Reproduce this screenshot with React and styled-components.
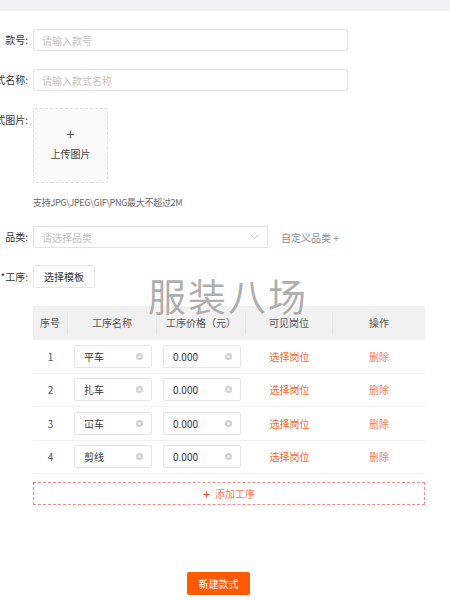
import React from 'react';
import styled, { createGlobalStyle } from 'styled-components';

const GlobalStyle = createGlobalStyle`
  body {
    margin: 0;
    background: #fff;
    font-family: "Noto Sans CJK SC", "Liberation Sans", sans-serif;
    font-size: 10px;
    color: #333;
  }
`;

const Page = styled.div`
  width: 450px;
  min-height: 600px;
  overflow: hidden;
`;

const TopBar = styled.div`
  height: 11px;
  background: #f0f0f2;
`;

const Form = styled.div`
  padding-top: 18px;
  display: flex;
  flex-direction: column;
`;

const Row = styled.div`
  display: flex;
  align-items: ${p => (p.$top ? 'flex-start' : 'center')};
  margin-bottom: ${p => p.$mb || 18}px;
`;

const Label = styled.div`
  width: 28px;
  margin-right: 5px;
  display: flex;
  justify-content: flex-end;
  white-space: nowrap;
  color: #333;
  font-size: 10px;
  line-height: 22px;
  padding-top: ${p => p.$pt || 0}px;
  flex-shrink: 0;
`;

const Input = styled.div`
  box-sizing: border-box;
  width: ${p => p.$w}px;
  height: 22px;
  border: 1px solid #e3e3e3;
  border-radius: 2px;
  padding: 0 8px;
  display: flex;
  align-items: center;
  justify-content: space-between;
  color: #c2c2c2;
  font-size: 10px;
`;

const Chevron = styled.svg`
  width: 9px;
  height: 6px;
`;

const TextLink = styled.span`
  margin-left: 13px;
  color: #8a8a8a;
  font-size: 10px;
`;

const Upload = styled.div`
  box-sizing: border-box;
  width: 75px;
  height: 75px;
  border: 1px dashed #e0e0e0;
  background: #fafafa;
  border-radius: 2px;
  display: flex;
  flex-direction: column;
  align-items: center;
  padding-top: 16px;
`;

const Plus = styled.div`
  font-size: 15px;
  line-height: 18px;
  color: #555;
`;

const UploadText = styled.div`
  margin-top: 3px;
  font-size: 10px;
  color: #444;
`;

const Hint = styled.div`
  margin-left: 33px;
  margin-bottom: 17px;
  margin-top: -4px;
  font-size: 9px;
  line-height: 12px;
  color: #666;
  letter-spacing: -0.3px;
`;

const GhostButton = styled.div`
  box-sizing: border-box;
  width: 62px;
  height: 23px;
  border: 1px solid #e8e8e8;
  border-radius: 2px;
  display: flex;
  align-items: center;
  justify-content: center;
  color: #333;
  font-size: 10px;
`;

const TableWrap = styled.div`
  position: relative;
  margin-left: 33px;
  width: 392px;
`;

const Watermark = styled.div`
  position: absolute;
  left: 115px;
  top: -31px;
  font-size: 38px;
  line-height: 40px;
  letter-spacing: 2px;
  color: rgba(120, 120, 120, 0.6);
  text-shadow: 1px 1px 0 rgba(255, 255, 255, 0.8), -1px -1px 0 rgba(255, 255, 255, 0.8);
  white-space: nowrap;
  pointer-events: none;
`;

const Grid = styled.div`
  display: grid;
  grid-template-columns: 35px 89px 89px 87px 92px;
  align-items: center;
  height: ${p => (p.$head ? 34 : 33.5)}px;
  background: ${p => (p.$head ? '#f1f1f1' : '#fff')};
  border-bottom: 1px solid ${p => (p.$head ? '#f1f1f1' : '#f0f0f0')};
  box-sizing: border-box;
`;

const HeadCell = styled.div`
  text-align: center;
  color: #555;
  font-size: 10px;
  height: 22px;
  line-height: 22px;
  border-right: ${p => (p.$last ? 'none' : '1px solid #e6e6e6')};
`;

const Cell = styled.div`
  display: flex;
  justify-content: ${p => (p.$left ? 'flex-start' : 'center')};
  padding-left: ${p => (p.$left ? 6 : 0)}px;
  color: ${p => p.$color || '#555'};
  font-size: 10px;
`;

const CellInput = styled.div`
  box-sizing: border-box;
  width: 78px;
  height: 23px;
  border: 1px solid #e6e6e6;
  border-radius: 2px;
  padding: 0 8px 0 9px;
  display: flex;
  align-items: center;
  justify-content: space-between;
  color: #333;
  font-size: 10px;
`;

const Clear = styled.span`
  width: 7px;
  height: 7px;
  border-radius: 50%;
  background: #cfcfcf;
  position: relative;
  &::after {
    content: '';
    position: absolute;
    left: 2px;
    top: 2px;
    width: 3px;
    height: 3px;
    border-radius: 50%;
    background: #f5f5f5;
  }
`;

const AddRow = styled.div`
  box-sizing: border-box;
  margin: 8px 0 0 33px;
  width: 392px;
  height: 23px;
  border: 1px dashed #ec8c8c;
  display: flex;
  align-items: center;
  justify-content: center;
  color: #f07a5a;
  font-size: 10px;
`;

const AddPlus = styled.span`
  color: #e8443a;
  font-size: 13px;
  margin-right: 5px;
  line-height: 13px;
`;

const Footer = styled.div`
  display: flex;
  justify-content: flex-start;
  padding-left: 187px;
  margin-top: 67px;
`;

const Primary = styled.div`
  width: 63px;
  height: 23px;
  background: #ff5a06;
  border-radius: 2px;
  color: #fff;
  font-size: 10px;
  display: flex;
  align-items: center;
  justify-content: center;
`;

const rows = [
  { no: 1, name: '平车' },
  { no: 2, name: '扎车' },
  { no: 3, name: '冚车' },
  { no: 4, name: '剪线' },
];

export default function App() {
  return (
    <Page>
      <GlobalStyle />
      <TopBar />
      <Form>
        <Row>
          <Label>款号:</Label>
          <Input $w={315}>请输入款号</Input>
        </Row>
        <Row $mb={17}>
          <Label>款式名称:</Label>
          <Input $w={315}>请输入款式名称</Input>
        </Row>
        <Row $top $mb={18}>
          <Label $pt={1}>款式图片:</Label>
          <Upload>
            <Plus>+</Plus>
            <UploadText>上传图片</UploadText>
          </Upload>
        </Row>
        <Hint>支持JPG\JPEG\GIF\PNG最大不超过2M</Hint>
        <Row $mb={17}>
          <Label>品类:</Label>
          <Input $w={235}>
            请选择品类
            <Chevron viewBox="0 0 9 6">
              <path d="M1 1l3.5 3.5L8 1" fill="none" stroke="#c8c8c8" strokeWidth="1" />
            </Chevron>
          </Input>
          <TextLink>自定义品类 +</TextLink>
        </Row>
        <Row $mb={18}>
          <Label>*工序:</Label>
          <GhostButton>选择模板</GhostButton>
        </Row>
        <TableWrap>
          <Grid $head>
            <HeadCell>序号</HeadCell>
            <HeadCell>工序名称</HeadCell>
            <HeadCell>工序价格（元）</HeadCell>
            <HeadCell>可见岗位</HeadCell>
            <HeadCell $last>操作</HeadCell>
          </Grid>
          {rows.map(r => (
            <Grid key={r.no}>
              <Cell>{r.no}</Cell>
              <Cell $left>
                <CellInput>{r.name}<Clear /></CellInput>
              </Cell>
              <Cell $left>
                <CellInput>0.000<Clear /></CellInput>
              </Cell>
              <Cell $color="#f26b2a">选择岗位</Cell>
              <Cell $color="#f0844f">删除</Cell>
            </Grid>
          ))}
          <Watermark>服装八场</Watermark>
        </TableWrap>
        <AddRow>
          <AddPlus>+</AddPlus>添加工序
        </AddRow>
        <Footer>
          <Primary>新建款式</Primary>
        </Footer>
      </Form>
    </Page>
  );
}
